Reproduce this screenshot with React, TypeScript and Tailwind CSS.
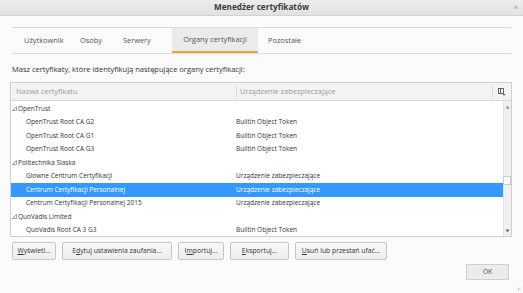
import React from "react";

const font = { fontFamily: '"Open Sans", "Noto Sans", sans-serif' };

function Tri() {
  return (
    <svg width="5" height="5" viewBox="0 0 5 5" className="mr-[1px] mb-[1px]">
      <path d="M4.5 0.5 L4.5 4.5 L0.5 4.5 Z" fill="none" stroke="#8a8a8a" strokeWidth="0.8" />
    </svg>
  );
}

type Row = { name: string; dev?: string; group?: boolean; sel?: boolean };

const rows: Row[] = [
  { name: "OpenTrust", group: true },
  { name: "OpenTrust Root CA G2", dev: "Builtin Object Token" },
  { name: "OpenTrust Root CA G1", dev: "Builtin Object Token" },
  { name: "OpenTrust Root CA G3", dev: "Builtin Object Token" },
  { name: "Politechnika Slaska", group: true },
  { name: "Glowne Centrum Certyfikacji", dev: "Urządzenie zabezpieczające" },
  { name: "Centrum Certyfikacji Personalnej", dev: "Urządzenie zabezpieczające", sel: true },
  { name: "Centrum Certyfikacji Personalnej 2015", dev: "Urządzenie zabezpieczające" },
  { name: "QuoVadis Limited", group: true },
  { name: "QuoVadis Root CA 3 G3", dev: "Builtin Object Token" },
];

function Btn({ children, w }: { children: React.ReactNode; w: string }) {
  return (
    <div
      className={`${w} h-[18px] flex items-center justify-center border border-[#c6c6c6] rounded-[2px] bg-gradient-to-b from-[#f9f9f9] to-[#ededed] text-[6.8px] text-[#333] whitespace-nowrap`}
    >
      {children}
    </div>
  );
}

export default function App() {
  return (
    <div style={font} className="w-[523px] h-[293px] bg-[#fbfbfb] flex flex-col overflow-hidden relative">
      {/* title bar */}
      <div className="h-[16px] bg-gradient-to-b from-[#ececec] to-[#e2e2e2] border-b border-[#d2d2d2] flex items-center justify-center relative shrink-0">
        <span className="text-[8.2px] font-bold text-[#3a3a3a] leading-none">Menedżer certyfikatów</span>
        <span className="absolute right-[5px] top-[3px] text-[8px] text-[#9a9a9a] leading-none">×</span>
      </div>

      {/* tabs */}
      <div className="mt-[11px] mx-[12px] h-[27px] border-t border-b border-[#dcdcdc] flex text-[7.4px] text-[#555] shrink-0">
        <div className="w-[58px] pl-[12px] flex items-center">Użytkownik</div>
        <div className="w-[47px] pl-[10px] flex items-center">Osoby</div>
        <div className="w-[55px] pl-[6px] flex items-center">Serwery</div>
        <div className="w-[86px] bg-[#ebebeb] border-b-2 border-[#f0a33a] flex items-center justify-center">Organy certyfikacji</div>
        <div className="pl-[10px] flex items-center">Pozostałe</div>
      </div>

      <div className="mt-[11px] ml-[12px] h-[10px] flex items-center text-[7.5px] text-[#333] shrink-0">
        Masz certyfikaty, które identyfikują następujące organy certyfikacji:
      </div>

      {/* table */}
      <div className="mt-[7px] ml-[10px] w-[502px] h-[155px] border border-[#cfcfcf] bg-white flex flex-col shrink-0">
        <div className="h-[18px] bg-[#f3f3f3] border-b border-[#d6d6d6] flex items-center text-[7.4px] text-[#9a9a9a] shrink-0">
          <div className="w-[225px] pl-[5px]">Nazwa certyfikatu</div>
          <div className="w-[1px] h-[12px] bg-[#dcdcdc]" />
          <div className="w-[255px] pl-[3px]">Urządzenie zabezpieczające</div>
          <div className="w-[1px] h-[12px] bg-[#dcdcdc]" />
          <div className="flex-1 flex items-center justify-center">
            <svg width="8" height="8" viewBox="0 0 8 8">
              <rect x="0.5" y="0.5" width="5" height="5" fill="none" stroke="#555" strokeWidth="0.9" />
              <line x1="2.5" y1="0.5" x2="2.5" y2="5.5" stroke="#555" strokeWidth="0.9" />
              <path d="M4.5 6 L7.5 6 L6 7.8 Z" fill="#555" />
            </svg>
          </div>
        </div>
        <div className="flex flex-1 min-h-0">
          <div className="flex-1 pt-[1px]">
            {rows.map((r, i) => (
              <div
                key={i}
                className={`h-[13.5px] flex items-center text-[6.5px] ${r.sel ? "bg-[#3399ff] text-white" : "text-[#333]"}`}
              >
                {r.group ? (
                  <div className="pl-[1px] flex items-end">
                    <Tri />
                    <span className="leading-none">{r.name}</span>
                  </div>
                ) : (
                  <>
                    <div className="w-[225px] pl-[15px] whitespace-nowrap">{r.name}</div>
                    <div className="whitespace-nowrap">{r.dev}</div>
                  </>
                )}
              </div>
            ))}
          </div>
          <div className="w-[8px] bg-[#f0f0f0] border-l border-[#e3e3e3] flex flex-col items-center">
            <svg width="5" height="4" viewBox="0 0 5 4" className="mt-[4px]">
              <path d="M0.5 3.5 L2.5 0.8 L4.5 3.5 Z" fill="#888" />
            </svg>
            <div className="mt-[67px] w-[8px] h-[9px] bg-[#fafafa] border border-[#c8c8c8] ml-[-1px]" />
            <div className="flex-1" />
            <svg width="5" height="4" viewBox="0 0 5 4" className="mb-[3px]">
              <path d="M0.5 0.5 L2.5 3.2 L4.5 0.5 Z" fill="#666" />
            </svg>
          </div>
        </div>
      </div>

      {/* buttons */}
      <div className="mt-[5px] ml-[12px] flex gap-[6px] shrink-0">
        <Btn w="w-[44px]"><span><u>W</u>yświetl...</span></Btn>
        <Btn w="w-[110px]"><span>E<u>d</u>ytuj ustawienia zaufania...</span></Btn>
        <Btn w="w-[46px]"><span>I<u>m</u>portuj...</span></Btn>
        <Btn w="w-[59px]"><span><u>E</u>ksportuj...</span></Btn>
        <Btn w="w-[92px]"><span><u>U</u>suń lub przestań ufać...</span></Btn>
      </div>

      <div className="mt-[4px] mr-[14px] flex justify-end shrink-0">
        <div className="w-[43px] h-[16px] flex items-center justify-center border border-[#d0d0d0] bg-[#ececec] text-[7px] text-[#555]">
          OK
        </div>
      </div>

      <svg width="5" height="5" viewBox="0 0 5 5" className="absolute right-[2px] bottom-[2px]">
        <rect x="3.5" y="0.5" width="1" height="1" fill="#ccc" />
        <rect x="2" y="2" width="1" height="1" fill="#ccc" />
        <rect x="3.5" y="2" width="1" height="1" fill="#ccc" />
        <rect x="0.5" y="3.5" width="1" height="1" fill="#ccc" />
        <rect x="2" y="3.5" width="1" height="1" fill="#ccc" />
        <rect x="3.5" y="3.5" width="1" height="1" fill="#ccc" />
      </svg>
    </div>
  );
}
